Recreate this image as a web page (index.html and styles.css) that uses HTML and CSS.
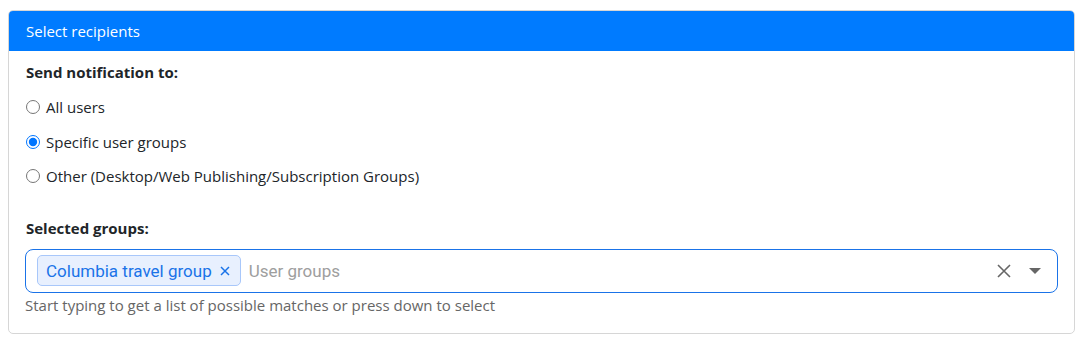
FILE: index.html
```html
<!DOCTYPE html>
<html lang="en">
<head>
    <meta charset="UTF-8">
    <title>Select recipients</title>
    <link rel="stylesheet" href="styles.css">
</head>
<body>
    <div class="card">
        <div class="card-header">Select recipients</div>
        <div class="card-body">
            <div class="section-label">Send notification to:</div>
            <label class="radio-row"><input type="radio" name="target"> All users</label>
            <label class="radio-row"><input type="radio" name="target" checked> Specific user groups</label>
            <label class="radio-row"><input type="radio" name="target"> Other (Desktop/Web Publishing/Subscription Groups)</label>

            <div class="section-label groups-label">Selected groups:</div>
            <div class="chip-input">
                <span class="chip">Columbia travel group
                    <svg class="chip-x" width="10" height="10" viewBox="0 0 10 10"><path d="M1 1 L9 9 M9 1 L1 9" stroke="#1a73e8" stroke-width="1.5" fill="none"/></svg>
                </span>
                <span class="placeholder">User groups</span>
                <span class="clear-btn">
                    <svg width="16" height="16" viewBox="0 0 16 16"><path d="M2 2 L14 14 M14 2 L2 14" stroke="#666" stroke-width="1.6" fill="none"/></svg>
                </span>
                <span class="caret"></span>
            </div>
            <div class="help-text">Start typing to get a list of possible matches or press down to select</div>
        </div>
    </div>
</body>
</html>
```

FILE: styles.css
```css
body {
    margin: 0;
    padding: 10px 6px 0 8px;
    font-family: 'Open Sans', 'Noto Sans', sans-serif;
    font-size: 15px;
    color: #212529;
    background: #fff;
}
.card {
    border: 1px solid #d6d6d6;
    border-radius: 5px;
    overflow: hidden;
}
.card-header {
    background-color: #007bff;
    color: white;
    height: 40px;
    line-height: 40px;
    padding: 0 17px;
    font-size: 15px;
}
.card-body {
    padding: 10px 16px 18px 16px;
}
.section-label {
    font-weight: bold;
    height: 22px;
    line-height: 22px;
    margin-bottom: 15px;
    padding-left: 1px;
}
.groups-label {
    margin-top: 23px;
    margin-bottom: 10px;
}
.radio-row {
    display: flex;
    align-items: center;
    height: 34.5px;
    gap: 6px;
    margin-top: -8px;
    margin-bottom: 8px;
}
.radio-row input {
    margin: 0 0 0 1px;
    width: 14px;
    height: 14px;
}
.chip-input {
    display: flex;
    align-items: center;
    height: 42px;
    border: 1px solid #1a73e8;
    border-radius: 8px;
    padding: 0 11px;
    gap: 8px;
}
.chip {
    display: flex;
    align-items: center;
    font-family: Roboto, sans-serif;
    font-size: 17px;
    color: #1a73e8;
    background-color: #e8f0fe;
    border: 1px solid #a8c7fa;
    border-radius: 5px;
    height: 29px;
    padding: 0 10px 0 8px;
}
.chip-x {
    margin-left: 8px;
}
.placeholder {
    font-family: Roboto, sans-serif;
    font-size: 17px;
    color: #9e9e9e;
    flex: 1;
}
.clear-btn {
    display: flex;
    margin-right: 9px;
}
.caret {
    width: 0;
    height: 0;
    border-left: 6px solid transparent;
    border-right: 6px solid transparent;
    border-top: 6px solid #666;
    margin-right: 5px;
}
.help-text {
    color: #666;
    margin-top: 2px;
}
```
